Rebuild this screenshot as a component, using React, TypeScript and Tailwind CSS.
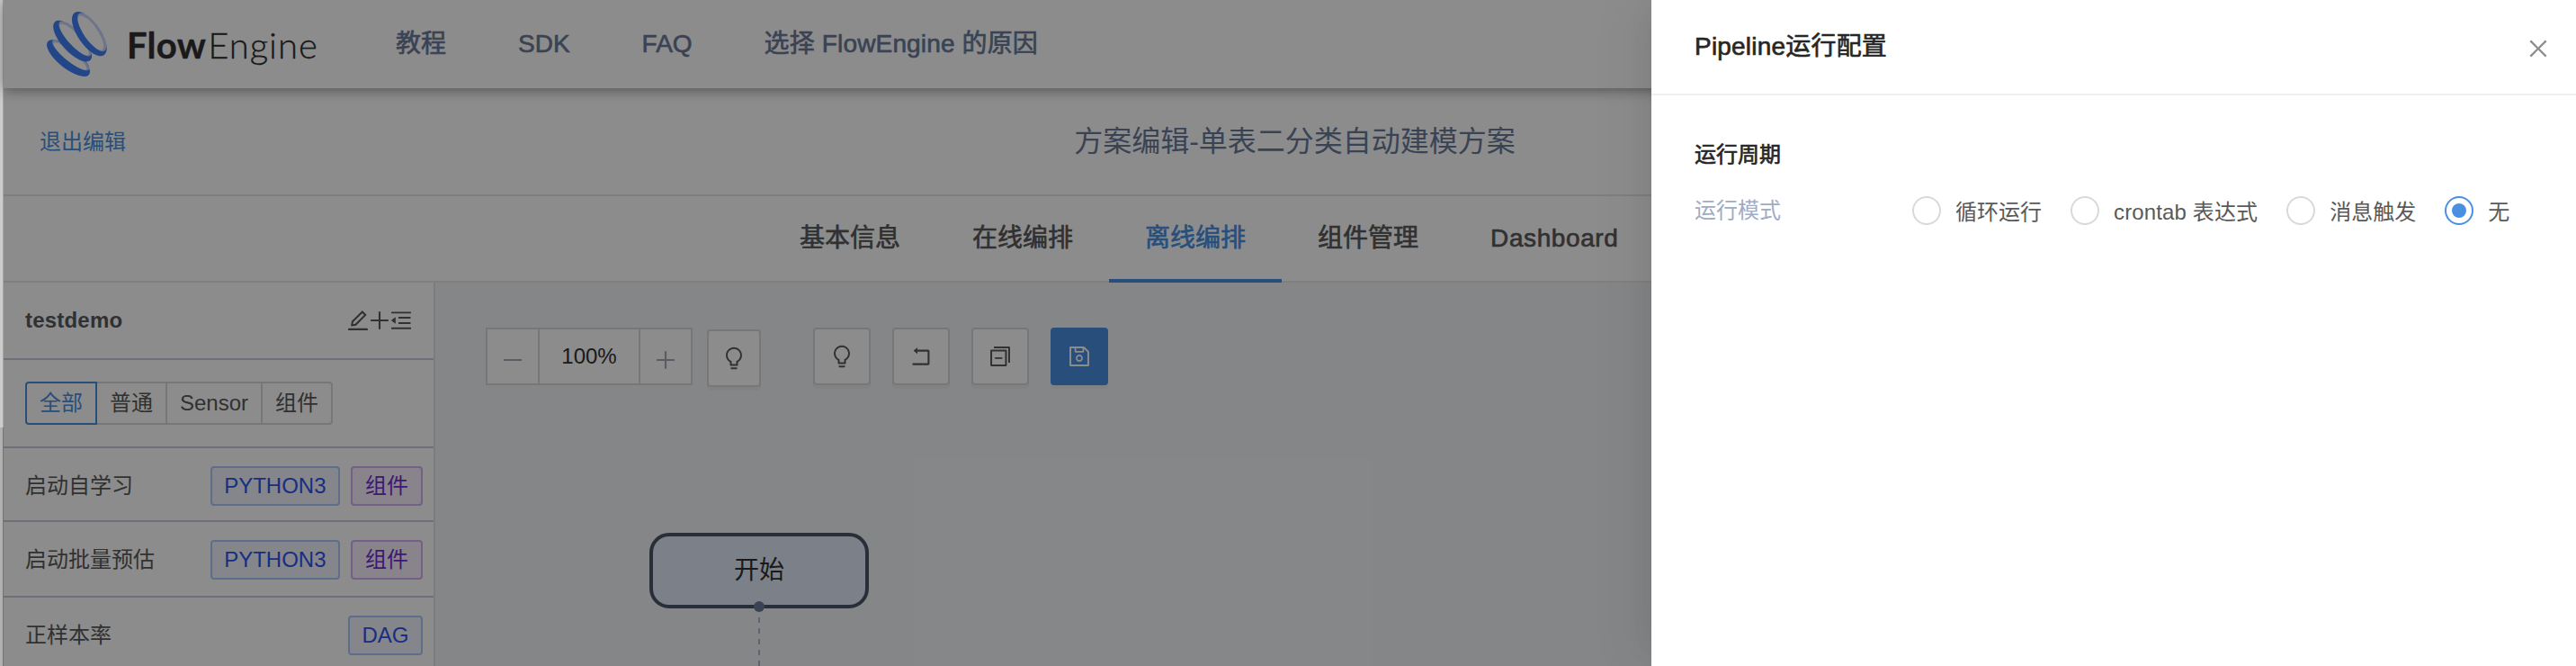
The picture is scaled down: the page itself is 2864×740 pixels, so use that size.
import React from "react";
import {
  AiOutlineBulb,
  AiOutlineClose,
  AiOutlineEdit,
  AiOutlineMenuFold,
  AiOutlineMinus,
  AiOutlinePlus,
  AiOutlineRollback,
  AiOutlineSave,
  AiOutlineSwitcher,
} from "react-icons/ai";

const NAV = ["教程", "SDK", "FAQ", "选择 FlowEngine 的原因"];
const TABS = ["基本信息", "在线编排", "离线编排", "组件管理", "Dashboard"];

type Kind = "blue" | "purple";
const ROWS: { name: string; height: string; tags: { text: string; kind: Kind }[] }[] = [
  {
    name: "启动自学习",
    height: "h-[82px] pt-1",
    tags: [
      { text: "PYTHON3", kind: "blue" },
      { text: "组件", kind: "purple" },
    ],
  },
  {
    name: "启动批量预估",
    height: "h-[84px] pt-0.5",
    tags: [
      { text: "PYTHON3", kind: "blue" },
      { text: "组件", kind: "purple" },
    ],
  },
  { name: "正样本率", height: "h-[84px] pt-0.5", tags: [{ text: "DAG", kind: "blue" }] },
];

const TAG_STYLE: Record<Kind, string> = {
  blue: "border-[#adc6ff] bg-[#f0f5ff] text-[#2f54eb] px-[13.5px]",
  purple: "border-[#d3adf7] bg-[#f9f0ff] text-[#722ed1] px-3.5",
};

function ellipse(a: number, b: number, v: number) {
  return `M${-a} ${v}a${a} ${b} 0 1 0 ${2 * a} 0a${a} ${b} 0 1 0 ${-2 * a} 0z`;
}

type RingProps = { x: number; y: number; a: number; b: number; angle: number; t: number };

function Ring({ x, y, a, b, angle, t }: RingProps) {
  const inner = ellipse(a - 11, b - t / 2, -t / 2);
  return (
    <g transform={`translate(${x} ${y}) rotate(${angle})`} fillRule="evenodd">
      <path d={inner + ellipse(a - 18, b - t / 2 - 4.5, -t / 2 + 4.5)} fill="#c8d6fb" />
      <path d={ellipse(a, b, 0) + inner} fill="#4180fa" />
    </g>
  );
}

function Logo() {
  return (
    <div className="flex items-center">
      <svg className="h-[76px] w-[70px]" viewBox="30 30 210 228">
        <Ring x={108} y={191} a={88} b={34} angle={38.6} t={26} />
        <Ring x={122} y={134} a={87} b={36} angle={47.4} t={24} />
        <Ring x={178} y={110} a={86} b={38} angle={55.4} t={21} />
      </svg>
      <div className="ml-[21px] mt-0.5 flex items-baseline font-[Lato,sans-serif] text-[40px] leading-[48px] text-[#303030]">
        <span className="font-bold tracking-[0.3px] [-webkit-text-stroke:0.4px]">Flow</span>
        <span className="ml-0.5 font-light tracking-[1px] [-webkit-text-stroke:0.3px]">Engine</span>
      </div>
    </div>
  );
}

function Header() {
  return (
    <header className="relative z-10 flex h-[98px] shrink-0 items-center bg-white pl-[46px] shadow-[0_2px_14px_rgba(0,20,12,0.45)]">
      <div className="w-[390px]">
        <Logo />
      </div>
      <nav className="flex gap-20 text-[28px] leading-10 text-[#6b7a99] [-webkit-text-stroke:0.65px_#6b7a99]">
        {NAV.map((n) => (
          <span key={n} className={n.length > 3 ? "tracking-[0.15px]" : ""}>
            {n}
          </span>
        ))}
      </nav>
    </header>
  );
}

function TitleBar() {
  return (
    <div className="grid h-[120px] shrink-0 grid-cols-[1fr_auto_1fr] items-center border-b-2 border-[#e2e5f0] pl-10 pr-[29px]">
      <a className="pt-0.5 text-2xl text-[#4a90e2]">退出编辑</a>
      <h1 className="text-[32px] leading-10 text-[#6b7a99]">方案编辑-单表二分类自动建模方案</h1>
    </div>
  );
}

function Tabs() {
  return (
    <div className="flex h-24 shrink-0 border-b-2 border-[#e8e8e8] pl-[845px] text-[28px] text-[#595959] [-webkit-text-stroke:0.65px]">
      {TABS.map((t) => (
        <div
          key={t}
          className={
            t === "离线编排"
              ? "-mb-0.5 flex h-24 items-center border-b-4 border-[#4a90e2] px-10 pt-0.5 text-[#4a90e2]"
              : t === "Dashboard"
                ? "flex h-24 items-center px-10 pb-0.5 tracking-[0.6px]"
                : "flex h-24 items-center px-10 pb-0.5"
          }
        >
          {t}
        </div>
      ))}
    </div>
  );
}

function Sidebar() {
  return (
    <aside className="flex w-[480px] shrink-0 flex-col border-r-2 border-[#e0e3e8] bg-white text-2xl text-[#595959]">
      <div className="flex h-[86px] shrink-0 items-center justify-between border-b-2 border-[#c8cad9] pl-6 pr-[22px]">
        <span className="font-bold tracking-[0.2px]">testdemo</span>
        <div className="flex -space-x-1 text-[28px]">
          <AiOutlineEdit />
          <AiOutlinePlus />
          <AiOutlineMenuFold />
        </div>
      </div>
      <div className="flex h-[98px] shrink-0 items-center border-b-2 border-[#c8cad9] pl-6">
        <div className="flex h-12 leading-[44px]">
          <span className="w-20 rounded-l border-2 border-[#4a90e2] text-center text-[#4a90e2]">全部</span>
          <span className="w-[78px] border-y-2 border-r-2 border-[#d9d9d9] text-center">普通</span>
          <span className="w-[106px] border-y-2 border-r-2 border-[#d9d9d9] text-center">Sensor</span>
          <span className="w-[78px] rounded-r border-y-2 border-r-2 border-[#d9d9d9] text-center">组件</span>
        </div>
      </div>
      {ROWS.map((r) => (
        <div
          key={r.name}
          className={`${r.height} flex shrink-0 items-center justify-between border-b-2 border-[#c8cad9] pl-6 pr-3`}
        >
          <span>{r.name}</span>
          <div className="flex gap-3">
            {r.tags.map((t) => (
              <span key={t.text} className={`${TAG_STYLE[t.kind]} h-11 rounded border-2 leading-10`}>
                {t.text}
              </span>
            ))}
          </div>
        </div>
      ))}
    </aside>
  );
}

function ToolButton({ children, className }: { children: React.ReactNode; className: string }) {
  return (
    <button
      className={`${className} flex h-16 items-center justify-center rounded border-2 text-[28px] shadow-[0_4px_0_rgba(0,0,0,0.03)]`}
    >
      {children}
    </button>
  );
}

function Canvas() {
  const plain = "w-16 border-[#d9d9d9] bg-white text-[#595959]";
  return (
    <section className="relative flex-1 bg-[#f3f5f8]">
      <div className="flex items-start pl-14 pt-[50px]">
        <div className="flex h-16 w-[230px] border-2 border-[#d9d9d9] bg-white text-[28px] text-[#a3a9b3]">
          <span className="flex w-[58px] items-center justify-center border-r-2 border-[#d9d9d9] pt-2">
            <AiOutlineMinus />
          </span>
          <span className="flex w-28 items-center justify-center border-r-2 border-[#d9d9d9] text-2xl text-[#303030]">
            100%
          </span>
          <span className="flex flex-1 items-center justify-center pt-2">
            <AiOutlinePlus />
          </span>
        </div>
        <ToolButton className="ml-4 mt-0.5 w-[60px] border-[#d9d9d9] bg-white text-[#595959]">
          <AiOutlineBulb />
        </ToolButton>
        <div className="ml-[58px] flex gap-6">
          <ToolButton className={plain}>
            <AiOutlineBulb />
          </ToolButton>
          <ToolButton className={plain}>
            <AiOutlineRollback />
          </ToolButton>
          <ToolButton className={plain}>
            <AiOutlineSwitcher />
          </ToolButton>
          <ToolButton className="w-16 border-[#4a90e2] bg-[#4a90e2] text-white">
            <AiOutlineSave />
          </ToolButton>
        </div>
      </div>
      <div className="absolute left-[238px] top-[278px] flex h-[84px] w-[244px] items-center justify-center rounded-[22px] border-4 border-[#4c5769] bg-[#e1e9f9] text-[28px] text-[#303030]">
        开始
      </div>
      <svg className="absolute left-[350px] top-[354px] h-[72px] w-5" viewBox="0 0 20 72">
        <path d="M10 18V72" stroke="#adb6cc" strokeWidth="2" strokeDasharray="6 6" />
        <circle cx="10" cy="6" r="6" fill="#697b99" />
      </svg>
    </section>
  );
}

function Radio({ label, checked }: { label: string; checked?: boolean }) {
  return (
    <label className="flex items-center gap-4">
      <span
        className={
          checked
            ? "flex size-8 items-center justify-center rounded-full border-2 border-[#4a90e2]"
            : "size-8 rounded-full border-2 border-[#d9d9d9]"
        }
      >
        {checked && <span className="size-4 rounded-full bg-[#4a90e2]" />}
      </span>
      <span className={label.startsWith("crontab") ? "pt-1 tracking-[0.14px]" : "pt-1"}>{label}</span>
    </label>
  );
}

function Drawer() {
  return (
    <div className="absolute inset-y-0 right-0 z-30 w-[1028px] bg-white shadow-[-12px_0_32px_-16px_rgba(0,0,0,0.08),-18px_0_56px_rgba(0,0,0,0.05)]">
      <div className="flex h-[106px] items-center justify-between border-b-2 border-[#f0f0f0] pl-12 pr-7">
        <h2 className="text-[28px] leading-10 tracking-[0.2px] text-[#262626] [-webkit-text-stroke:0.65px_#262626]">
          Pipeline运行配置
        </h2>
        <AiOutlineClose className="mt-1 text-[28px] text-[#8c8c8c]" />
      </div>
      <div className="pl-12 pt-12 text-2xl">
        <h3 className="leading-9 text-[#262626] [-webkit-text-stroke:0.65px_#262626]">运行周期</h3>
        <div className="mt-6 flex h-10 items-center">
          <span className="w-[242px] text-[#a0abc4]">运行模式</span>
          <div className="flex gap-8 text-[#595959]">
            <Radio label="循环运行" />
            <Radio label="crontab 表达式" />
            <Radio label="消息触发" />
            <Radio label="无" checked />
          </div>
        </div>
      </div>
    </div>
  );
}

export default function App() {
  return (
    <div className="relative flex h-[740px] w-[2864px] overflow-hidden bg-white font-['Liberation_Sans','Noto_Sans_CJK_SC',sans-serif]">
      <div className="flex w-1 shrink-0 flex-col">
        <div className="h-[475px] border-r border-[#a4a4a4] bg-[#cccccc]" />
        <div className="flex-1 border-r border-[#747474] bg-[#b0b0b0]" />
      </div>
      <div className="relative flex flex-1 flex-col">
        <Header />
        <TitleBar />
        <Tabs />
        <div className="flex h-[426px] overflow-hidden">
          <Sidebar />
          <Canvas />
        </div>
        <div className="absolute inset-0 z-20 bg-black/45" />
      </div>
      <Drawer />
    </div>
  );
}
